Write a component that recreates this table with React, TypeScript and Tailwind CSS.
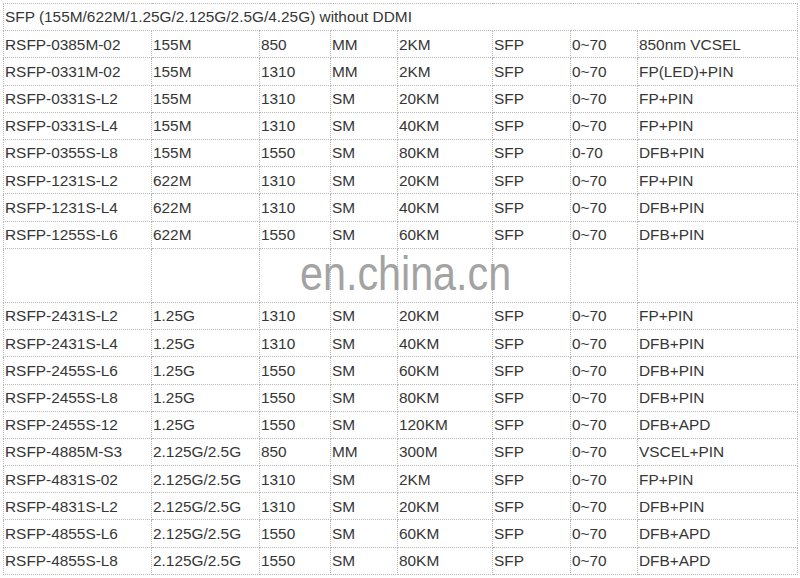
import React from "react";

const cols = [148, 108, 71, 67, 95, 78, 67, 160];

const top: string[][] = [
  ["RSFP-0385M-02", "155M", "850", "MM", "2KM", "SFP", "0~70", "850nm VCSEL"],
  ["RSFP-0331M-02", "155M", "1310", "MM", "2KM", "SFP", "0~70", "FP(LED)+PIN"],
  ["RSFP-0331S-L2", "155M", "1310", "SM", "20KM", "SFP", "0~70", "FP+PIN"],
  ["RSFP-0331S-L4", "155M", "1310", "SM", "40KM", "SFP", "0~70", "FP+PIN"],
  ["RSFP-0355S-L8", "155M", "1550", "SM", "80KM", "SFP", "0-70", "DFB+PIN"],
  ["RSFP-1231S-L2", "622M", "1310", "SM", "20KM", "SFP", "0~70", "FP+PIN"],
  ["RSFP-1231S-L4", "622M", "1310", "SM", "40KM", "SFP", "0~70", "DFB+PIN"],
  ["RSFP-1255S-L6", "622M", "1550", "SM", "60KM", "SFP", "0~70", "DFB+PIN"],
];

const bottom: string[][] = [
  ["RSFP-2431S-L2", "1.25G", "1310", "SM", "20KM", "SFP", "0~70", "FP+PIN"],
  ["RSFP-2431S-L4", "1.25G", "1310", "SM", "40KM", "SFP", "0~70", "DFB+PIN"],
  ["RSFP-2455S-L6", "1.25G", "1550", "SM", "60KM", "SFP", "0~70", "DFB+PIN"],
  ["RSFP-2455S-L8", "1.25G", "1550", "SM", "80KM", "SFP", "0~70", "DFB+PIN"],
  ["RSFP-2455S-12", "1.25G", "1550", "SM", "120KM", "SFP", "0~70", "DFB+APD"],
  ["RSFP-4885M-S3", "2.125G/2.5G", "850", "MM", "300M", "SFP", "0~70", "VSCEL+PIN"],
  ["RSFP-4831S-02", "2.125G/2.5G", "1310", "SM", "2KM", "SFP", "0~70", "FP+PIN"],
  ["RSFP-4831S-L2", "2.125G/2.5G", "1310", "SM", "20KM", "SFP", "0~70", "DFB+PIN"],
  ["RSFP-4855S-L6", "2.125G/2.5G", "1550", "SM", "60KM", "SFP", "0~70", "DFB+APD"],
  ["RSFP-4855S-L8", "2.125G/2.5G", "1550", "SM", "80KM", "SFP", "0~70", "DFB+APD"],
];

const cell = "border border-dotted border-[#b8b8b8] h-[27.2px] p-0 pl-[1px] align-middle whitespace-nowrap";

function Row({ r }: { r: string[] }) {
  return (
    <tr>
      {r.map((c, i) => (
        <td key={i} className={cell}>
          {c}
        </td>
      ))}
    </tr>
  );
}

export default function App() {
  return (
    <div className="relative w-[800px] h-[578px] bg-white overflow-hidden pt-[3px] pl-[3px]">
      <table
        className="table-fixed border-collapse w-[794px] text-[15.4px] leading-none text-[#363636]"
        style={{ fontFamily: '"Liberation Sans", Arial, sans-serif' }}
      >
        <colgroup>
          {cols.map((w, i) => (
            <col key={i} style={{ width: w }} />
          ))}
        </colgroup>
        <tbody>
          <tr>
            <td colSpan={8} className={cell}>
              SFP (155M/622M/1.25G/2.125G/2.5G/4.25G) without DDMI
            </td>
          </tr>
          {top.map((r, i) => (
            <Row key={i} r={r} />
          ))}
          <tr>
            {cols.map((_, i) => (
              <td key={i} className="border border-dotted border-[#b8b8b8] h-[54.3px] p-0" />
            ))}
          </tr>
          {bottom.map((r, i) => (
            <Row key={i} r={r} />
          ))}
        </tbody>
      </table>
      {/* watermark */}
      <div
        className="absolute left-[300px] top-[250px] text-[48px] leading-none text-[#a3a3a3] origin-left scale-x-[0.86]"
        style={{ fontFamily: '"Liberation Sans", Arial, sans-serif' }}
      >
        en.china.cn
      </div>
    </div>
  );
}
